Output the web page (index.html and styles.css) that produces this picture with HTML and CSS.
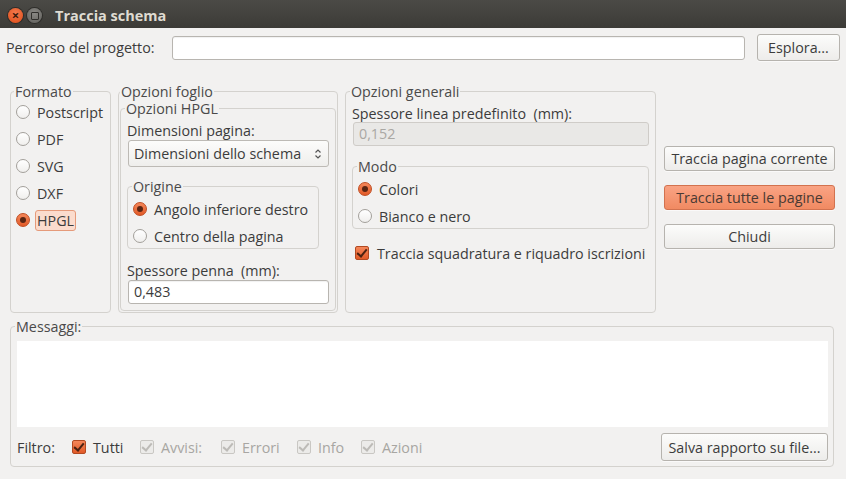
FILE: index.html
```html
<!DOCTYPE html>
<html lang="it">
<head>
<meta charset="UTF-8">
<title>Traccia schema</title>
<link rel="stylesheet" href="styles.css">
</head>
<body>

<div class="window">

  <!-- Title bar -->
  <div class="titlebar">
    <span class="wbtn close">&#215;</span>
    <span class="wbtn minimize"><i></i></span>
    <span class="title">Traccia schema</span>
  </div>

  <!-- Project path -->
  <div class="path-row">
    <span class="path-label">Percorso del progetto:</span>
    <span class="entry path-entry"></span>
    <span class="button browse">Esplora...</span>
  </div>

  <!-- Options -->
  <div class="options">

    <fieldset class="frame format">
      <legend>Formato</legend>
      <div class="radio-row"><span class="radio"></span>Postscript</div>
      <div class="radio-row"><span class="radio"></span>PDF</div>
      <div class="radio-row"><span class="radio"></span>SVG</div>
      <div class="radio-row"><span class="radio"></span>DXF</div>
      <div class="radio-row"><span class="radio checked"></span><span class="focus">HPGL</span></div>
    </fieldset>

    <fieldset class="frame sheet">
      <legend>Opzioni foglio</legend>
      <fieldset class="frame hpgl">
        <legend>Opzioni HPGL</legend>
        <div class="field-label page-label">Dimensioni pagina:</div>
        <div class="combo">
          <span>Dimensioni dello schema</span>
          <svg class="combo-arrows" width="8" height="12" viewBox="0 0 8 12">
            <path d="M1.5 4.5 L4 2 L6.5 4.5" fill="none" stroke="#555" stroke-width="1.2"/>
            <path d="M1.5 7.5 L4 10 L6.5 7.5" fill="none" stroke="#555" stroke-width="1.2"/>
          </svg>
        </div>
        <fieldset class="frame origin">
          <legend>Origine</legend>
          <div class="radio-row"><span class="radio checked"></span>Angolo inferiore destro</div>
          <div class="radio-row"><span class="radio"></span>Centro della pagina</div>
        </fieldset>
        <div class="field-label pen-label">Spessore penna &nbsp;(mm):</div>
        <div class="entry pen-entry">0,483</div>
      </fieldset>
    </fieldset>

    <fieldset class="frame general">
      <legend>Opzioni generali</legend>
      <div class="field-label line-label">Spessore linea predefinito &nbsp;(mm):</div>
      <div class="entry disabled line-entry">0,152</div>
      <fieldset class="frame mode">
        <legend>Modo</legend>
        <div class="radio-row"><span class="radio checked"></span>Colori</div>
        <div class="radio-row"><span class="radio"></span>Bianco e nero</div>
      </fieldset>
      <div class="check-row frame-check"><span class="check checked"></span>Traccia squadratura e riquadro iscrizioni</div>
    </fieldset>

    <div class="actions">
      <span class="button">Traccia pagina corrente</span>
      <span class="button suggested">Traccia tutte le pagine</span>
      <span class="button">Chiudi</span>
    </div>
  </div>

  <!-- Messages -->
  <fieldset class="frame messages">
    <legend>Messaggi:</legend>
    <div class="log"></div>
    <div class="filter-row">
      <span class="filter-label">Filtro:</span>
      <span class="check-row filter all"><span class="check checked"></span>Tutti</span>
      <span class="check-row filter warn off"><span class="check checked"></span>Avvisi:</span>
      <span class="check-row filter err off"><span class="check checked"></span>Errori</span>
      <span class="check-row filter info off"><span class="check checked"></span>Info</span>
      <span class="check-row filter act off"><span class="check checked"></span>Azioni</span>
      <span class="button save">Salva rapporto su file...</span>
    </div>
  </fieldset>

</div>

</body>
</html>
```

FILE: styles.css
```css
body { margin: 0; background: #f2f1f0; font-family: "Open Sans", "DejaVu Sans", sans-serif; font-size: 14.3px; color: #3c3c3c; }
.window { width: 846px; height: 479px; overflow: hidden; }

/* title bar */
.titlebar {
  height: 28px;
  background: linear-gradient(#4b4a46, #3c3b37);
  display: flex;
  align-items: center;
  padding-left: 8px;
}
.wbtn {
  width: 15px; height: 15px;
  border-radius: 50%;
  display: flex; align-items: center; justify-content: center;
  margin-top: 3px;
}
.close {
  background: radial-gradient(circle at 50% 35%, #f37a4e, #df4b16);
  box-shadow: 0 0 0 1px #2e2d2a;
  color: #3a1a0c; font-size: 13px; line-height: 1; font-weight: bold;
}
.minimize {
  margin-left: 4px;
  background: radial-gradient(circle at 50% 35%, #8a8985, #5f5e5a);
  box-shadow: 0 0 0 1px #2e2d2a;
}
.minimize i { width: 6px; height: 6px; border: 1px solid #302f2c; border-radius: 1px; }
.title { margin-left: 13px; color: #dfdbd2; font-weight: bold; font-size: 14.5px; margin-top: 2px; }

/* path row */
.path-row { display: flex; align-items: center; height: 27px; margin-top: 6px; padding: 0 6px; }
.path-label { width: 166px; flex: none; white-space: nowrap; }
.entry {
  background: #fff;
  border: 1px solid #b8b5b0;
  border-radius: 3px;
  box-shadow: inset 0 1px 1px rgba(0,0,0,0.06);
  box-sizing: border-box;
  height: 24px;
  line-height: 22px;
  padding: 0 5px;
}
.path-entry { flex: 1; }
.button {
  box-sizing: border-box;
  height: 25px;
  border: 1px solid #b6b3ae;
  border-radius: 3px;
  background: linear-gradient(#fcfcfb, #edecea);
  box-shadow: 0 1px 0 rgba(255,255,255,0.6);
  display: flex; align-items: center; justify-content: center;
  white-space: nowrap;
}
.browse { width: 83px; height: 27px; margin-left: 12px; }

/* frames */
.frame {
  margin: 0;
  border: 1px solid #d4d2ce;
  border-radius: 4px;
  padding: 0 0 0 4px;
  box-sizing: border-box;
  min-width: 0;
  display: flex;
  flex-direction: column;
}
.frame legend { padding: 0 1px; line-height: 17px; color: #4a4a4a; white-space: nowrap; }

.options { display: flex; height: 230px; margin-top: 22px; padding-left: 10px; }

.format { width: 101px; padding-left: 3px; gap: 3px; }
.format .radio { margin-left: 2px; }

.radio-row { display: flex; align-items: center; height: 24px; white-space: nowrap; }
.radio {
  width: 14px; height: 14px;
  box-sizing: border-box;
  border: 1px solid #a3a09b;
  border-radius: 50%;
  background: linear-gradient(#ffffff, #f0efed);
  margin-right: 7px;
  flex: none;
  display: flex; align-items: center; justify-content: center;
}
.radio.checked {
  border-color: #c04d22;
  background: linear-gradient(#f5875a, #e25a27);
}
.radio.checked::after { content: ""; width: 6px; height: 6px; border-radius: 50%; background: #5a2512; }
.focus {
  border: 1px solid #e59a7a;
  background: #fbdccd;
  border-radius: 3px;
  padding: 1px 1px;
  margin-left: -2px;
  line-height: 17px;
}

.sheet { width: 220px; margin-left: 7px; padding: 0 1px 1px 1px; }
.hpgl { flex: 1; padding: 0 6px 0 4px; }
.field-label { line-height: 17px; margin-left: 2px; white-space: nowrap; }
.page-label { margin-top: 5px; }
.combo {
  margin: 1px 0 0 3px;
  width: 201px; height: 27px;
  box-sizing: border-box;
  border: 1px solid #bdbab5;
  border-radius: 3px;
  background: linear-gradient(#fcfcfb, #efeeec);
  display: flex; align-items: center; justify-content: space-between;
  padding: 0 6px 0 5px;
  white-space: nowrap;
}
.combo-arrows { flex: none; }
.origin { width: 192px; margin: 11px 0 0 2px; padding: 2px 0 0 4px; gap: 3px; }
.origin .radio { margin-left: 1px; }
.pen-label { margin-top: 13px; }
.pen-entry { width: 201px; margin-left: 3px; margin-top: 1px; }

.general { width: 311px; margin-left: 7px; padding-left: 4px; }
.line-label { margin-top: 5px; }
.disabled { background: #e9e8e6; border-color: #cfccc8; color: #a9a7a3; box-shadow: none; }
.line-entry { width: 296px; margin-left: 3px; margin-top: 0; }
.mode { width: 297px; margin: 12px 0 0 2px; padding: 2px 0 0 4px; gap: 3px; }
.mode .radio { margin-left: 1px; }

.check-row { display: flex; align-items: center; white-space: nowrap; }
.check {
  width: 14px; height: 14px;
  box-sizing: border-box;
  border: 1px solid #a3a09b;
  border-radius: 2px;
  background: #fff;
  margin-right: 7px;
  flex: none;
  position: relative;
}
.check.checked { border-color: #b24a22; background: linear-gradient(#f5875a, #e25a27); }
.check.checked::after {
  content: "";
  position: absolute;
  left: 3px; top: 0px;
  width: 4px; height: 8px;
  border: solid #4a2212;
  border-width: 0 2px 2px 0;
  transform: rotate(40deg);
}
.frame-check { height: 24px; margin: 12px 0 0 5px; }
.frame-check .check { margin-right: 8px; }

.actions { width: 171px; margin-left: 8px; display: flex; flex-direction: column; gap: 14px; padding-top: 63px; }
.suggested { background: linear-gradient(#f9a384, #f18a62); border-color: #d2724f; color: #4a3a33; }

/* messages */
.messages { margin: 5px 0 0 10px; width: 824px; height: 149px; padding: 0 4px 5px 4px; }
.log { background: #fff; height: 86px; margin: 6px 1px 0 2px; }
.filter-row { display: flex; align-items: center; height: 28px; margin-top: 6px; padding-left: 2px; }
.filter-label { width: 55px; }
.filter { height: 24px; }
.all { width: 68px; }
.warn { width: 81px; }
.err { width: 76px; }
.info { width: 64px; }
.off { color: #a8a6a2; }
.off .check.checked { background: #ecebe9; border-color: #c9c7c3; }
.off .check.checked::after { border-color: #bdbbb7; }
.save { width: 167px; height: 28px; margin-left: auto; margin-right: 1px; }
```
